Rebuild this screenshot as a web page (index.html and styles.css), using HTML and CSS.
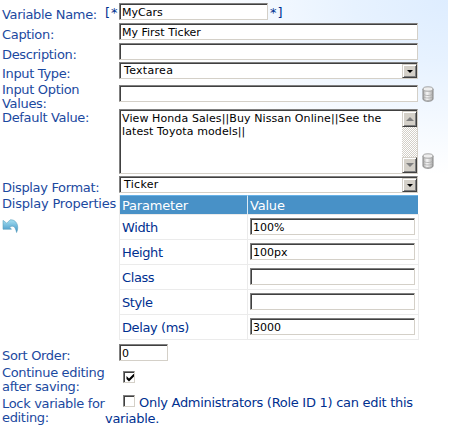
FILE: index.html
```
<!DOCTYPE html>
<html lang="en">
<head>
<meta charset="utf-8">
<title>Variable</title>
<link rel="stylesheet" href="styles.css">
</head>
<body>
<svg class="defs" width="0" height="0">
  <defs>
    <linearGradient id="metal"><stop offset="0" stop-color="#aaa"/><stop offset=".4" stop-color="#f8f8f8"/><stop offset="1" stop-color="#aaa"/></linearGradient>
    <linearGradient id="blue" x2="0" y2="1"><stop offset="0" stop-color="#a5e0f2"/><stop offset="1" stop-color="#3d91c4"/></linearGradient>
    <symbol id="db" viewBox="0 0 12 16">
      <path d="M1 3v10c0 3 10 3 10 0V3" fill="url(#metal)" stroke="#858585"/>
      <ellipse cx="6" cy="3" rx="5" ry="2.2" fill="#eee" stroke="#909090" stroke-width=".8"/>
      <path d="M1.500 8c1 2 8 2 9 0M1.500 10.500c1 2 8 2 9 0M1.500 13c1 2 8 2 9 0" fill="none" stroke="#aaa" stroke-width=".8"/>
    </symbol>
  </defs>
</svg>
<form class="form">
  <div class="row r-name"><label>Variable Name:</label><div class="field"><span class="open">[*</span><input class="box short" value="MyCars"><span class="close">*]</span></div></div>
  <div class="row r-caption"><label>Caption:</label><div class="field"><input class="box" value="My First Ticker"></div></div>
  <div class="row r-desc"><label>Description:</label><div class="field"><input class="box"></div></div>
  <div class="row r-type"><label>Input Type:</label><div class="field"><div class="box select"><span>Textarea</span><i class="btn drop"></i></div></div></div>
  <div class="row r-options"><label>Input Option<br>Values:</label><div class="field"><input class="box"><svg class="db"><use href="#db"/></svg></div></div>
  <div class="row r-default"><label>Default Value:</label><div class="field"><div class="box area"><p>View Honda Sales||Buy Nissan Online||See the<br>latest Toyota models||</p><div class="scroll"><i class="btn up"></i><i class="btn down"></i></div></div><svg class="db"><use href="#db"/></svg></div></div>
  <div class="row r-format"><label>Display Format:</label><div class="field"><div class="box select"><span>Ticker</span><i class="btn drop"></i></div></div></div>
  <div class="row r-props"><label><span class="props">Display Properties</span>
    <svg class="undo" viewBox="0 0 17 16"><path d="M.5 2.500V12h9L7.500 9.500c4-2 6-.5 7.500 6C18.500 8 14 1 8 2L4.500 5.500z" fill="url(#blue)" stroke="#579dbc" stroke-width=".6"/></svg></label>
    <div class="field"><div class="grid">
      <div class="head">Parameter</div><div class="head">Value</div>
      <div class="cell">Width</div><div class="cell"><input class="box" value="100%"></div>
      <div class="cell">Height</div><div class="cell"><input class="box" value="100px"></div>
      <div class="cell">Class</div><div class="cell"><input class="box"></div>
      <div class="cell">Style</div><div class="cell"><input class="box"></div>
      <div class="cell">Delay (ms)</div><div class="cell"><input class="box" value="3000"></div>
    </div></div></div>
  <div class="row r-sort"><label>Sort Order:</label><div class="field"><input class="box tiny" value="0"></div></div>
  <div class="row r-continue"><label>Continue editing<br>after saving:</label><div class="field"><span class="check"><svg viewBox="0 0 8 8"><path d="M.5 2v3L3 7.500l5-5v-3L3 4.500z"/></svg></span></div></div>
  <div class="row r-lock"><label>Lock variable for<br>editing:</label><div class="field"><span class="check"></span><span class="note">Only Administrators (Role ID 1) can edit this<br><span class="outdent">variable.</span></span></div></div>
</form>
</body>
</html>
```
FILE: styles.css
```
* { box-sizing: border-box; }
body {
  margin: 0;
  width: 450px;
  height: 432px;
  overflow: hidden;
  background: #fff;
  color: #003090;
  font: 13px/14px "DejaVu Sans", sans-serif;
}
.defs { position: absolute; }
.form {
  width: 448px;
  height: 432px;
  background: radial-gradient(ellipse 270px 175px at 100% 0, #deedff 0, #e7f2ff 35%, #f6faff 75%, #fff 100%);
}
.row { display: flex; height: var(--h); white-space: nowrap; }
.row > label { width: 119px; flex: none; padding: var(--l) 0 0 2px; color: #1b49a0; letter-spacing: -0.33px; }
.props { letter-spacing: -0.2px; }
.field { display: flex; align-items: flex-start; padding-top: var(--f); }
.r-name { --h: 22px; --l: 8px; --f: 3px; }
.r-caption { --h: 20px; --l: 6px; --f: 1px; }
.r-desc { --h: 19px; --l: 6px; --f: 1px; }
.r-type { --h: 19px; --l: 6px; --f: 1px; }
.r-options { --h: 27px; --l: 3px; --f: 5px; }
.r-default { --h: 68px; --l: 4px; --f: 2px; }
.r-format { --h: 19px; --l: 6px; --f: 1px; }
.r-props { --h: 148px; --l: 3px; --f: 1px; }
.r-sort { --h: 21px; --l: 7px; --f: 2px; }
.r-continue { --h: 29px; --l: 3px; --f: 8px; }
.r-lock { --h: 40px; --l: 5px; --f: 3px; }

.box {
  display: block;
  width: 299px;
  height: 17px;
  margin: 0;
  padding: 0 1px;
  border: 1px solid;
  border-color: #808080 #d4d0c8 #d4d0c8 #808080;
  border-radius: 0;
  outline: 0;
  background: #fff;
  box-shadow: inset 1px 1px #404040;
  color: #000;
  font: 11px/14px "DejaVu Sans", sans-serif;
  letter-spacing: 0.1px;
}
input.box { padding: 1px 2px 0; letter-spacing: 0; }
.short { width: 149px; }
.tiny { width: 49px; }
.open { width: 14px; margin: 3px 0 0 -14px; letter-spacing: 1px; }
.close { margin: 3px 0 0 2px; letter-spacing: 1px; }

.select { display: flex; justify-content: space-between; padding: 1px 0 0 4px; letter-spacing: 0.3px; }
.btn {
  display: flex;
  align-items: center;
  justify-content: center;
  width: 15px;
  height: 14px;
  background: #d4d0c8;
  border: 1px solid;
  border-color: #d4d0c8 #404040 #404040 #d4d0c8;
  box-shadow: inset 1px 1px #fff, inset -1px -1px #808080;
}
.btn::before { content: ""; border: solid transparent; border-width: 3px 3px 0; border-top-color: #000; }
.area { display: flex; justify-content: space-between; height: 65px; padding: 1px 0 0 2px; }
.area p { margin: 1px 0 0; line-height: 13px; }
.scroll {
  display: flex;
  flex-direction: column;
  justify-content: space-between;
  width: 15px;
  height: 62px;
  background: repeating-conic-gradient(#fff 0 25%, #d4d0c8 0 50%) 0 0 / 2px 2px;
}
.scroll .btn { height: 16px; }
.scroll .btn::before { border-width: 4px 4px 0; border-top-color: #808080; }
.scroll .up::before { border-width: 0 4px 4px; border-bottom-color: #808080; }
.db { width: 12px; height: 16px; margin: 1px 0 0 4px; }
.r-default .db { margin-top: 44px; }
.undo { display: block; width: 17px; height: 15px; margin-top: 7px; }

.grid {
  display: grid;
  grid-template-columns: 127px 172px;
  grid-template-rows: 19px repeat(5, 25px);
  width: 300px;
  border-left: 1px solid #ebebeb;
  border-bottom: 1px solid #ebebeb;
}
.head { padding: 3px 2px 0; color: #fff; background: #4891c7; border-top: 1px solid #69b3e8; letter-spacing: -0.2px; }
.head + .head { border-left: 1px solid #dcebf5; margin-right: 1px; }
.cell { border-top: 1px solid #ebebeb; border-right: 1px solid #ebebeb; padding: 6px 2px 0; letter-spacing: -0.4px; }
.cell:nth-child(even) { padding: 3px 0 0 3px; }
.cell:nth-child(odd) { margin-right: -1px; }
.cell .box { width: 165px; }

.check {
  width: 12px;
  height: 12px;
  margin-left: 4px;
  padding: 2px 0 0 2px;
  background: #fff;
  border: 1px solid;
  border-color: #808080 #d4d0c8 #d4d0c8 #808080;
  box-shadow: inset 1px 1px #404040;
}
.check svg { display: block; width: 8px; height: 8px; }
.note { margin: 0 0 0 4px; line-height: 16px; letter-spacing: -0.28px; }
.outdent { margin-left: -34px; }
```
